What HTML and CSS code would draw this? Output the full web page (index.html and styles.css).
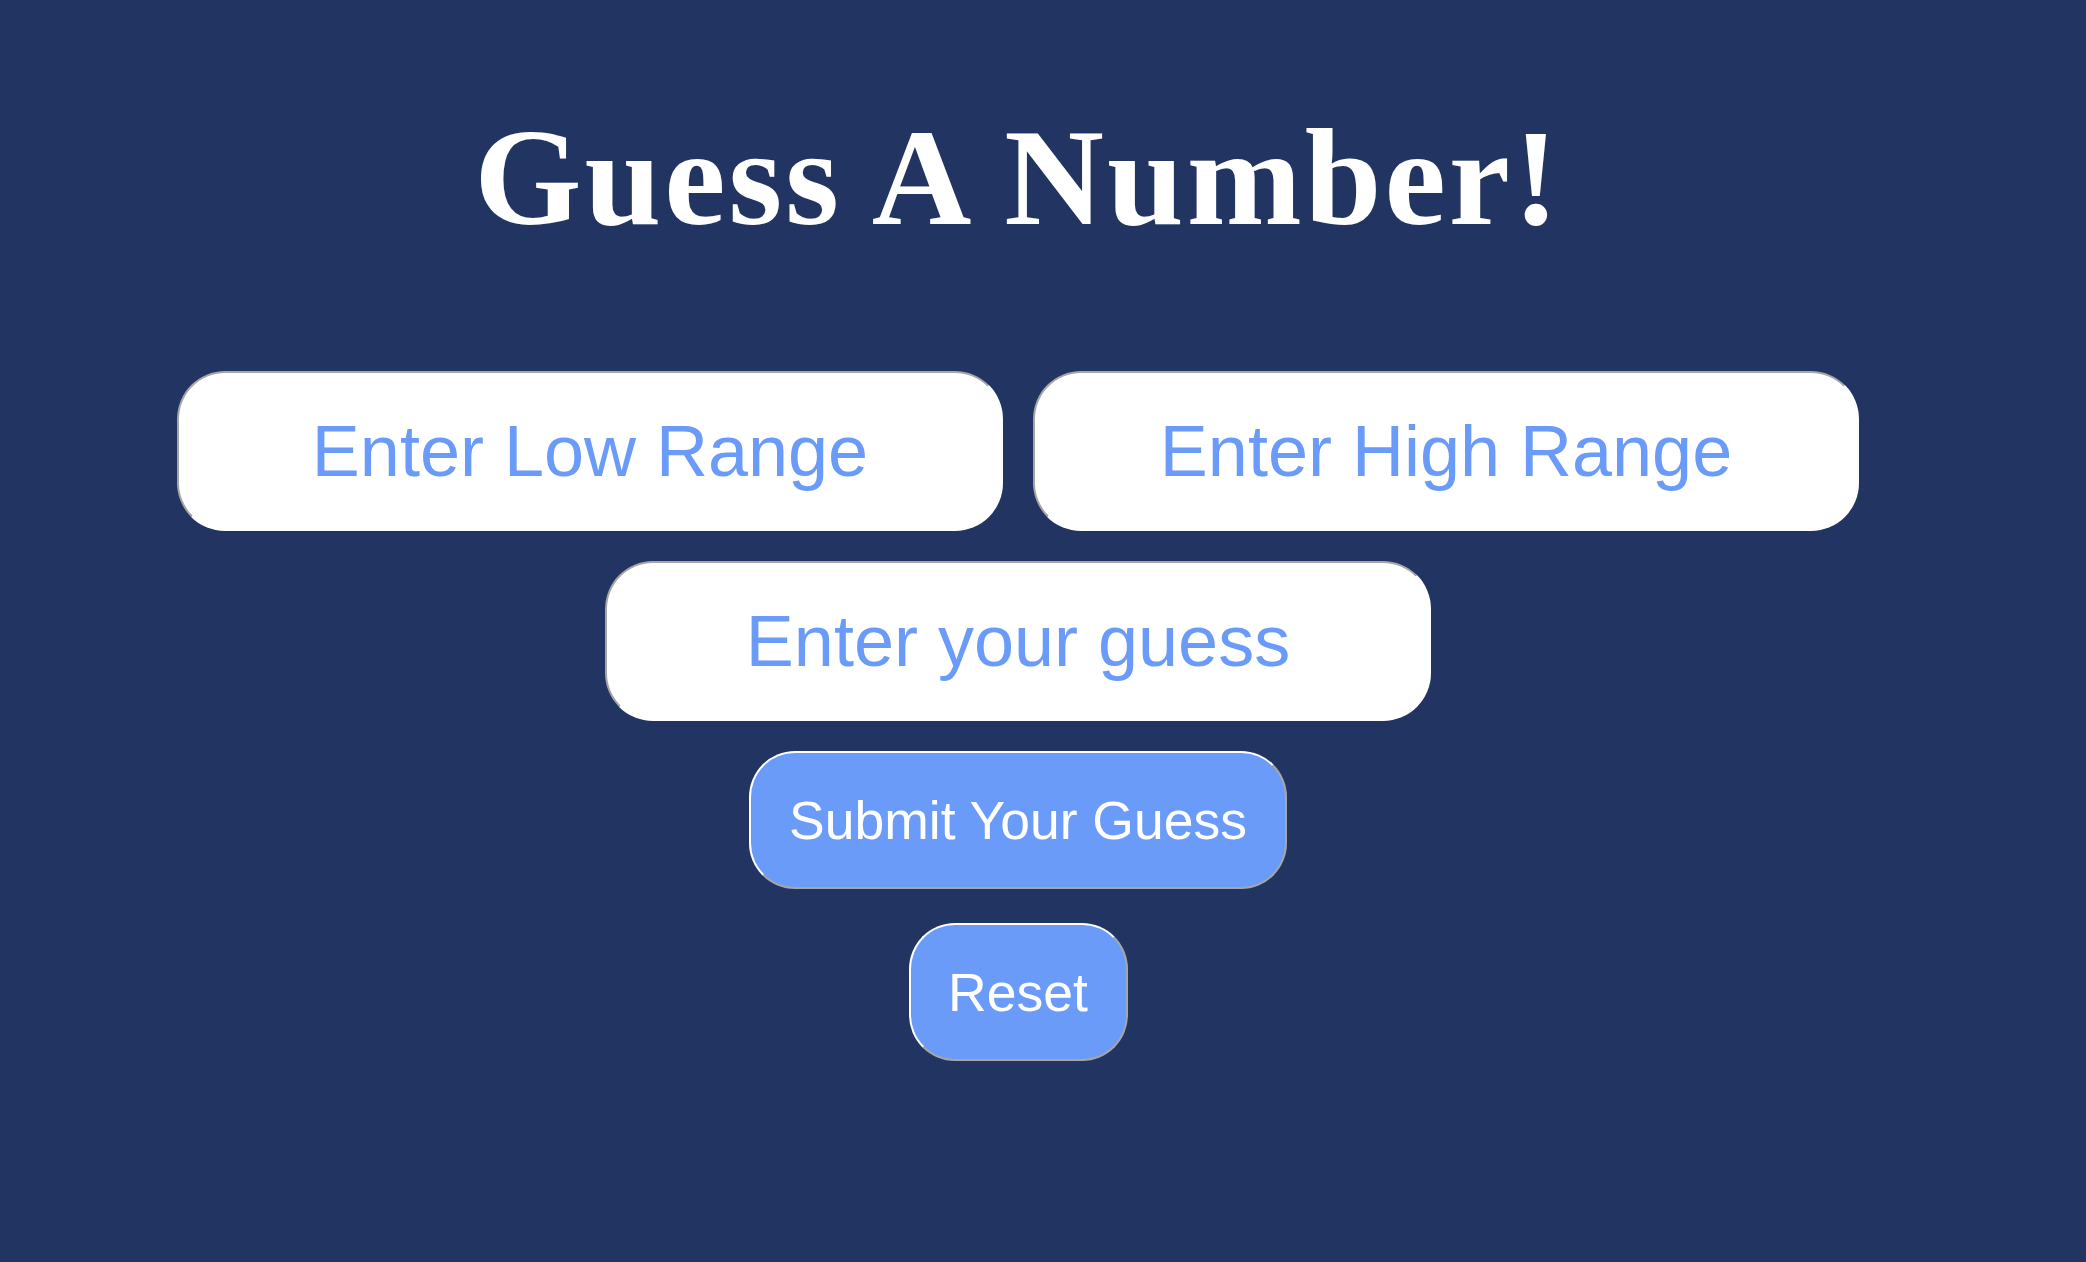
FILE: index.html
```html
<!DOCTYPE html>
<html lang="en">
<head>
<meta charset="utf-8">
<title>Guess A Number!</title>
<link rel="stylesheet" href="styles.css">
</head>
<body>
<main class="app">
  <h1 class="title">Guess A Number!</h1>
  <div class="range-row">
    <input class="field" type="text" placeholder="Enter Low Range">
    <input class="field" type="text" placeholder="Enter High Range">
  </div>
  <input class="field guess" type="text" placeholder="Enter your guess">
  <button class="btn submit" type="button">Submit Your Guess</button>
  <button class="btn reset" type="button">Reset</button>
</main>
</body>
</html>
```

FILE: styles.css
```css
html, body {
  margin: 0;
  padding: 0;
  background: #223462;
  height: 100%;
}

.app {
  box-sizing: border-box;
  width: 2036px;
  display: flex;
  flex-direction: column;
  align-items: center;
  padding-top: 104px;
}

.title {
  margin: 0;
  font-family: "Liberation Serif", "Times New Roman", serif;
  font-weight: bold;
  font-size: 138px;
  letter-spacing: 3px;
  line-height: 148px;
  color: #ffffff;
  text-align: center;
}

.range-row {
  display: flex;
  gap: 30px;
  margin-top: 119px;
}

.field {
  box-sizing: border-box;
  width: 826px;
  height: 160px;
  padding: 0 36px;
  border-width: 2px;
  border-style: solid;
  border-color: #a6a6a6 #ffffff #ffffff #a6a6a6;
  border-radius: 48px;
  background: #ffffff;
  font-family: "Liberation Sans", Arial, sans-serif;
  font-size: 72px;
  text-align: center;
  color: #6a9bf8;
  outline: none;
}

.field::placeholder {
  color: #6a9bf8;
  opacity: 1;
}

.guess {
  margin-top: 30px;
}

.btn {
  box-sizing: border-box;
  height: 138px;
  padding: 0 37px;
  border-width: 2px;
  border-style: solid;
  border-color: #ffffff #a6a6a6 #a6a6a6 #ffffff;
  border-radius: 46px;
  background: #6a9bf8;
  color: #ffffff;
  font-family: "Liberation Sans", Arial, sans-serif;
  font-size: 53.5px;
  line-height: 61px;
}

.submit {
  margin-top: 30px;
  width: 538px;
}

.reset {
  margin-top: 34px;
  width: 219px;
}
```
